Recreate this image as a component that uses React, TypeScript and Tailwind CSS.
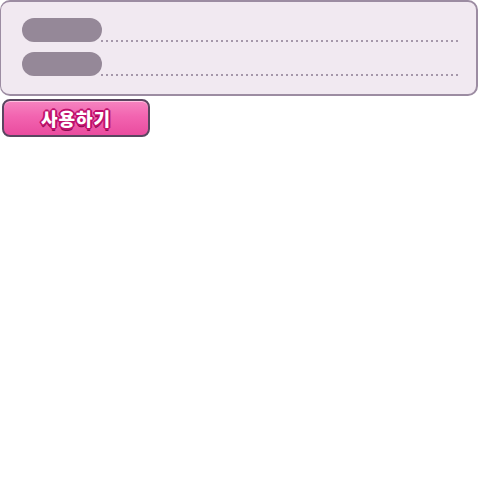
import React from "react";

const rows = [0, 1];

const DotRow: React.FC = () => (
  <div className="flex items-end">
    <div className="w-[80px] h-[24px] rounded-full bg-[#958898] shrink-0" />
    <div className="flex-1 h-[2px] mb-[0px] ml-[-1px] bg-[linear-gradient(to_right,#a597aa_2px,transparent_2px)] bg-[length:5px_2px]" />
  </div>
);

const App: React.FC = () => {
  return (
    <div className="w-[478px] h-[478px] bg-white font-['Noto_Sans_CJK_KR',sans-serif]">
      <div className="w-[478px] h-[96px] rounded-[10px] border border-t-2 border-r-2 border-b-2 border-[#9c8ca2] bg-[#f1e9f1] pl-[21px] pr-[18px] pt-[16px] flex flex-col gap-[10px]">
        {rows.map((r) => (
          <DotRow key={r} />
        ))}
      </div>
      <div className="ml-[2px] mt-[3px] w-[148px] h-[38px] rounded-[8px] border-2 border-[#5a4660] bg-[linear-gradient(to_bottom,#f684c0_0%,#f264b0_45%,#ea4c9f_100%)] flex items-center justify-center shadow-[inset_0_1px_0_#ffc0e0]">
        <span className="text-white font-black text-[18px] leading-none tracking-[1px] [text-shadow:-2px_0_0_#c0106c,2px_0_0_#c0106c,0_-2px_0_#c0106c,0_2px_0_#c0106c,-1px_-1px_0_#c0106c,1px_-1px_0_#c0106c,-1px_1px_0_#c0106c,1px_1px_0_#c0106c,0_3px_0_#8a0c50]">
          사용하기
        </span>
      </div>
    </div>
  );
};

export default App;
